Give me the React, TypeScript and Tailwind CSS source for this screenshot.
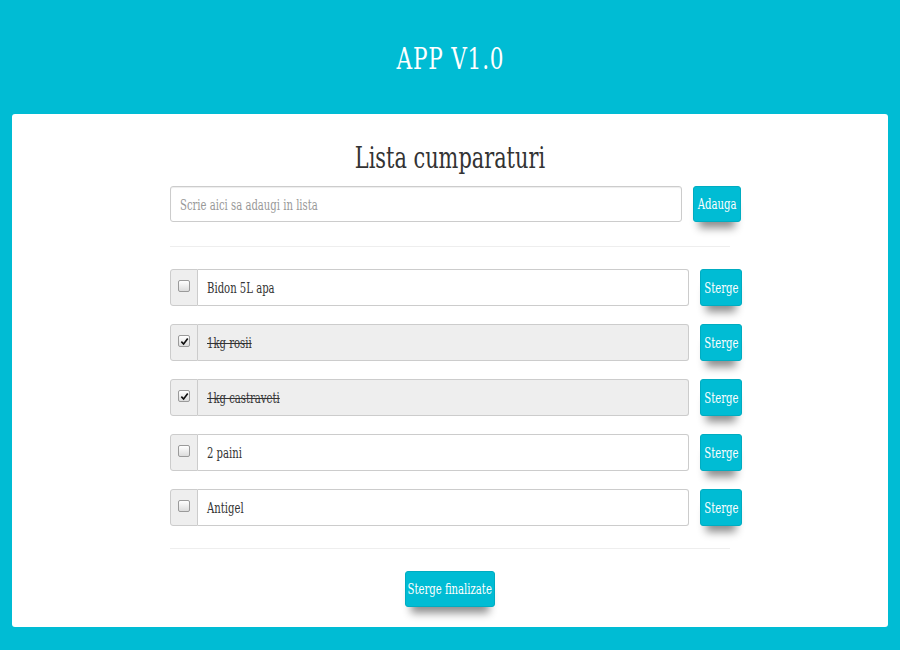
import { useState } from "react";

// --- lista de cumparaturi ----------------------------------------------------

type Item = { id: number; text: string; done: boolean };

const FONT = "font-['Roboto_Slab','DejaVu_Serif',serif] [font-stretch:condensed]";

const btn =
  "flex items-center justify-center overflow-visible whitespace-nowrap bg-[#00bcd4] text-white rounded-[3px] border border-[#00acc1] shadow-[0_12px_8px_-6px_rgba(0,0,0,0.45)] text-[14px] leading-none";

// text ingust (fontul din captura e condensat)
const Narrow = ({ children, left }: { children: React.ReactNode; left?: boolean }) => (
  <span className={`inline-block whitespace-nowrap scale-x-[0.8] ${left ? "origin-left" : "origin-center"}`}>
    {children}
  </span>
);

const Check = ({ on, onClick }: { on: boolean; onClick: () => void }) => (
  <div
    onClick={onClick}
    className="flex h-[12px] w-[12px] cursor-pointer items-center justify-center rounded-[2px] border border-[#9a9a9a] bg-linear-to-b from-white to-[#dcdcdc]"
  >
    {on && (
      <svg viewBox="0 0 10 10" className="h-[9px] w-[9px]">
        <path d="M1.5 5.2 L4 7.8 L8.6 1.6" fill="none" stroke="#111" strokeWidth="1.8" />
      </svg>
    )}
  </div>
);

export default function App() {
  const [items, setItems] = useState<Item[]>([
    { id: 1, text: "Bidon 5L apa", done: false },
    { id: 2, text: "1kg rosii", done: true },
    { id: 3, text: "1kg castraveti", done: true },
    { id: 4, text: "2 paini", done: false },
    { id: 5, text: "Antigel", done: false },
  ]);

  const toggle = (id: number) =>
    setItems((xs) => xs.map((x) => (x.id === id ? { ...x, done: !x.done } : x)));

  return (
    <div className={`min-h-[650px] bg-[#00bcd4] pb-[23px] ${FONT}`}>
      {/* antet */}
      <div className="flex h-[114px] items-center justify-center pt-[2px]">
        <h1 className="text-[30px] font-light tracking-[1px] text-white">
          <Narrow>APP V1.0</Narrow>
        </h1>
      </div>

      {/* card */}
      <div className="mx-3 h-[513px] rounded-[3px] bg-white pt-[22px]">
        <div className="mx-auto w-[560px]">
          <h2 className="h-[44px] text-center text-[29px] leading-[44px] text-[#333]">
            <Narrow>Lista cumparaturi</Narrow>
          </h2>

          <div className="mt-[6px] flex">
            <div className="flex h-[36px] w-[512px] shrink-0 items-center rounded-[3px] border border-[#ccc] px-[9px] pt-[2px] text-[14px] text-[#999] shadow-[inset_0_1px_1px_rgba(0,0,0,0.075)]">
              <Narrow left>Scrie aici sa adaugi in lista</Narrow>
            </div>
            <button className={`ml-[11px] h-[36px] w-[48px] shrink-0 ${btn}`}>
              <Narrow>Adauga</Narrow>
            </button>
          </div>

          <hr className="mt-[24px] border-t border-[#eee]" />

          <div className="mt-[22px] flex flex-col gap-[18px]">
            {items.map((it) => (
              <div key={it.id} className="flex">
                <div className="flex h-[37px] w-[519px] shrink-0">
                  <div className="flex w-[28px] items-center justify-center rounded-l-[3px] border border-[#ccc] bg-[#eee] pb-[3px]">
                    <Check on={it.done} onClick={() => toggle(it.id)} />
                  </div>
                  <div
                    className={`flex flex-1 items-center rounded-r-[3px] border border-l-0 border-[#ccc] px-[9px] pt-[2px] text-[14px] text-[#333] ${
                      it.done ? "bg-[#eee] line-through" : "bg-white"
                    }`}
                  >
                    <Narrow left>{it.text}</Narrow>
                  </div>
                </div>
                <button className={`ml-[11px] h-[37px] w-[42px] shrink-0 ${btn}`}>
                  <Narrow>Sterge</Narrow>
                </button>
              </div>
            ))}
          </div>

          <hr className="mt-[22px] border-t border-[#eee]" />

          <div className="mt-[22px] flex justify-center">
            <button className={`h-[36px] w-[90px] ${btn}`}>
              <Narrow>Sterge finalizate</Narrow>
            </button>
          </div>
        </div>
      </div>
    </div>
  );
}
